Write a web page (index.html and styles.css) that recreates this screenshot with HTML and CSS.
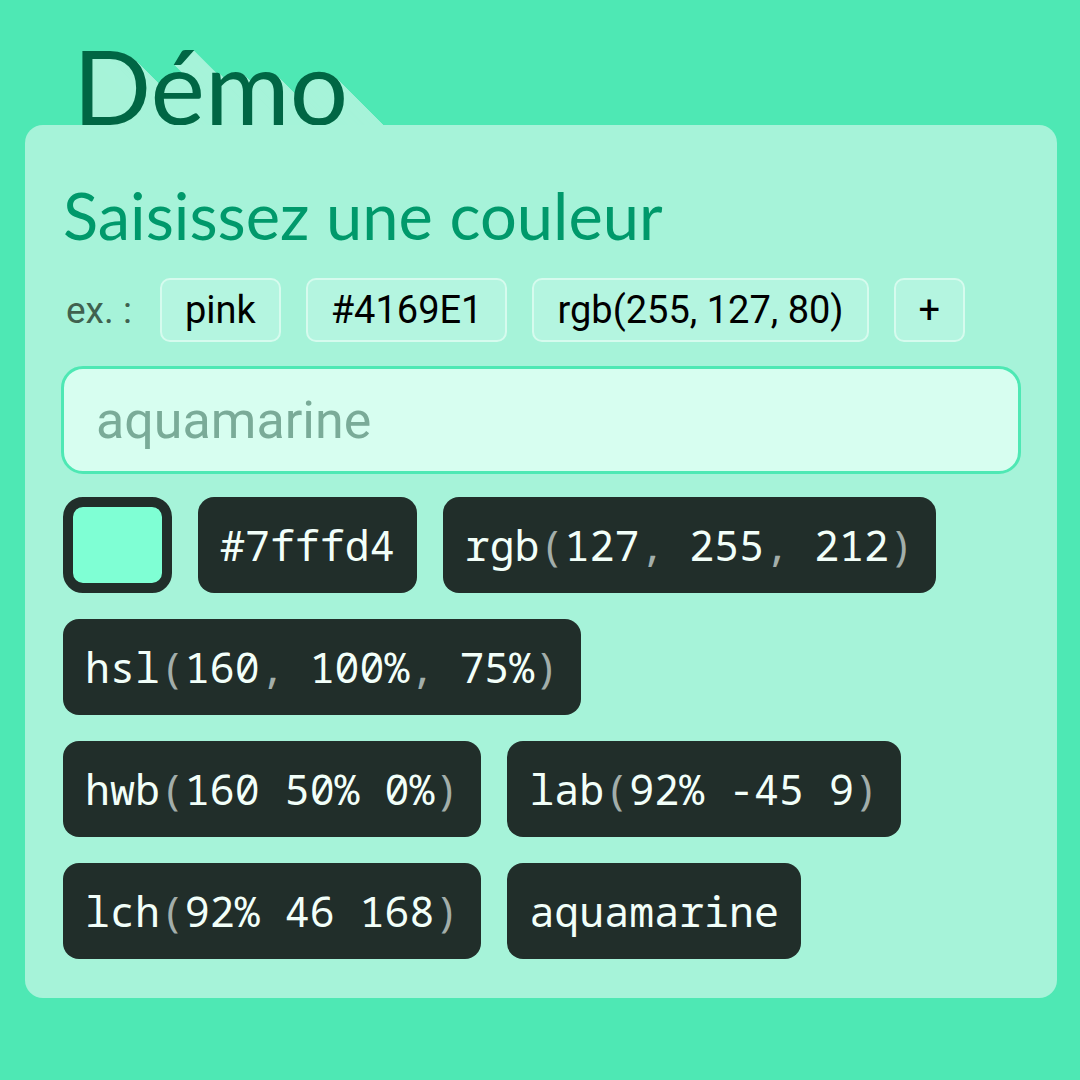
FILE: index.html
```html
<!DOCTYPE html>
<html lang="fr">
<head>
<meta charset="utf-8">
<title>Démo</title>
<link rel="stylesheet" href="styles.css">
</head>
<body>
<main class="page">
  <h1 class="title">Démo</h1>
  <section class="card">
    <h2 class="heading">Saisissez une couleur</h2>
    <div class="examples">
      <span class="ex-label">ex. :</span>
      <button class="ex-chip">pink</button>
      <button class="ex-chip">#4169E1</button>
      <button class="ex-chip">rgb(255, 127, 80)</button>
      <button class="ex-chip">+</button>
    </div>
    <input class="color-input" type="text" placeholder="aquamarine">
    <div class="outputs">
      <div class="swatch"></div>
      <code class="out">#7fffd4</code>
      <code class="out">rgb<span class="p">(</span>127<span class="p">, </span>255<span class="p">, </span>212<span class="p">)</span></code>
      <code class="out">hsl<span class="p">(</span>160<span class="p">, </span>100%<span class="p">, </span>75%<span class="p">)</span></code>
      <code class="out">hwb<span class="p">(</span>160 50% 0%<span class="p">)</span></code>
      <code class="out">lab<span class="p">(</span>92% -45 9<span class="p">)</span></code>
      <code class="out">lch<span class="p">(</span>92% 46 168<span class="p">)</span></code>
      <code class="out">aquamarine</code>
    </div>
  </section>
</main>
</body>
</html>
```
FILE: styles.css
```css
html, body {
  margin: 0;
  padding: 0;
  background: #4ee8b4;
}

.page {
  width: 1080px;
  height: 1080px;
  box-sizing: border-box;
  padding: 34px 23px 0 25px;
  overflow: hidden;
}

.title {
  margin: 0;
  padding-left: 48px;
  font-family: "Lato", "Noto Sans", sans-serif;
  font-weight: 400;
  font-size: 103px;
  line-height: 1;
  color: #006644;
  text-shadow:
    1px 1px #a6f3d9, 2px 2px #a6f3d9, 3px 3px #a6f3d9, 4px 4px #a6f3d9, 5px 5px #a6f3d9,
    6px 6px #a6f3d9, 7px 7px #a6f3d9, 8px 8px #a6f3d9, 9px 9px #a6f3d9, 10px 10px #a6f3d9,
    11px 11px #a6f3d9, 12px 12px #a6f3d9, 13px 13px #a6f3d9, 14px 14px #a6f3d9, 15px 15px #a6f3d9,
    16px 16px #a6f3d9, 17px 17px #a6f3d9, 18px 18px #a6f3d9, 19px 19px #a6f3d9, 20px 20px #a6f3d9,
    21px 21px #a6f3d9, 22px 22px #a6f3d9, 23px 23px #a6f3d9, 24px 24px #a6f3d9, 25px 25px #a6f3d9,
    26px 26px #a6f3d9, 27px 27px #a6f3d9, 28px 28px #a6f3d9, 29px 29px #a6f3d9, 30px 30px #a6f3d9,
    31px 31px #a6f3d9, 32px 32px #a6f3d9, 33px 33px #a6f3d9, 34px 34px #a6f3d9, 35px 35px #a6f3d9,
    36px 36px #a6f3d9, 37px 37px #a6f3d9, 38px 38px #a6f3d9, 39px 39px #a6f3d9, 40px 40px #a6f3d9,
    41px 41px #a6f3d9, 42px 42px #a6f3d9, 43px 43px #a6f3d9, 44px 44px #a6f3d9, 45px 45px #a6f3d9,
    46px 46px #a6f3d9, 47px 47px #a6f3d9, 48px 48px #a6f3d9, 49px 49px #a6f3d9, 50px 50px #a6f3d9,
    51px 51px #a6f3d9, 52px 52px #a6f3d9, 53px 53px #a6f3d9, 54px 54px #a6f3d9, 55px 55px #a6f3d9,
    56px 56px #a6f3d9, 57px 57px #a6f3d9, 58px 58px #a6f3d9, 59px 59px #a6f3d9, 60px 60px #a6f3d9,
    61px 61px #a6f3d9, 62px 62px #a6f3d9, 63px 63px #a6f3d9, 64px 64px #a6f3d9, 65px 65px #a6f3d9,
    66px 66px #a6f3d9, 67px 67px #a6f3d9, 68px 68px #a6f3d9, 69px 69px #a6f3d9, 70px 70px #a6f3d9,
    71px 71px #a6f3d9, 72px 72px #a6f3d9, 73px 73px #a6f3d9, 74px 74px #a6f3d9, 75px 75px #a6f3d9,
    76px 76px #a6f3d9, 77px 77px #a6f3d9, 78px 78px #a6f3d9, 79px 79px #a6f3d9, 80px 80px #a6f3d9;
}

.card {
  position: relative;
  margin-top: -12px;
  background: #a6f3d9;
  border-radius: 18px;
  padding: 0 36px 39px 36px;
  display: flex;
  flex-direction: column;
}

.heading {
  margin: 51px 0 0 2px;
  font-family: "Lato", "Noto Sans", sans-serif;
  font-weight: 400;
  font-size: 65px;
  line-height: 78px;
  color: #00996b;
}

.examples {
  display: flex;
  align-items: center;
  gap: 25px;
  margin-top: 24px;
  padding-left: 5px;
}

.ex-label {
  font-family: "Roboto", "Liberation Sans", sans-serif;
  font-size: 37px;
  color: #40614f;
  margin-right: 3px;
}

.ex-chip {
  font-family: "Roboto", "Liberation Sans", sans-serif;
  font-size: 38px;
  color: #000;
  background: #b4f5e0;
  border: 2px solid #d6fbee;
  border-radius: 10px;
  height: 64px;
  padding: 0 23px;
  margin: 0;
  line-height: 1;
}

.color-input {
  margin-top: 24px;
  height: 108px;
  box-sizing: border-box;
  border: 3px solid #4ee8b4;
  border-radius: 22px;
  background: #d7fef0;
  padding: 0 32px;
  font-family: "Roboto", "Liberation Sans", sans-serif;
  font-size: 52px;
  color: #1a3d30;
  outline: none;
}

.color-input::placeholder {
  color: #7aab98;
}

.outputs {
  margin-top: 23px;
  display: flex;
  flex-wrap: wrap;
  gap: 26px;
  padding-left: 2px;
}

.swatch {
  width: 109px;
  height: 96px;
  box-sizing: border-box;
  border: 10px solid #212e2a;
  border-radius: 20px;
  background: #7fffd4;
}

.out {
  display: block;
  height: 96px;
  line-height: 96px;
  padding: 0 22px;
  border-radius: 16px;
  background: #212e2a;
  color: #f2fff9;
  font-family: "Noto Sans Mono", "Droid Sans Mono", "DejaVu Sans Mono", monospace;
  font-size: 41.6px;
  white-space: pre;
}

.p {
  color: #a3aeaa;
}
```
